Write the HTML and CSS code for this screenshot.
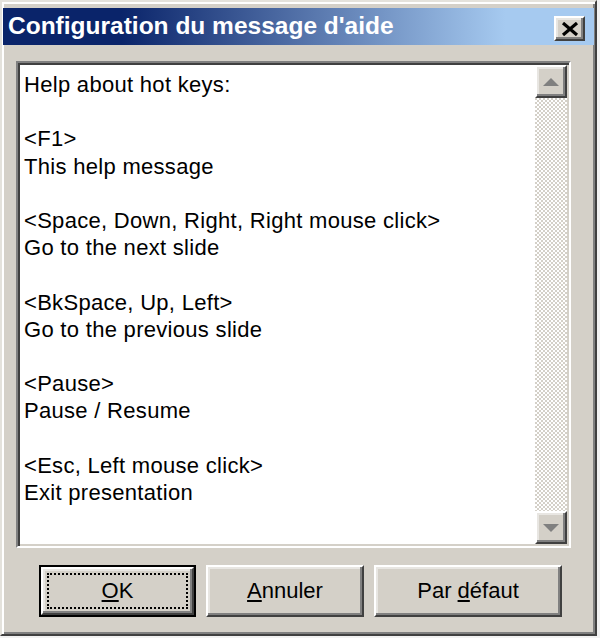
FILE: index.html
```html
<!DOCTYPE html>
<html lang="fr">

<head>
    <title>Configuration du message d'aide</title>
    <meta charset="utf-8">
    <link rel="stylesheet" href="styles.css">
</head>

<body>
    <div class="dlg_window">
        <div class="dlg_titlebar">
            <span class="dlg_title">Configuration du message d'aide</span>
            <div class="dlg_close raised">
                <svg width="18" height="14" viewBox="0 0 18 14">
                    <path d="M2 1 L16 13 M16 1 L2 13" stroke="#000" stroke-width="3.2" fill="none" />
                </svg>
            </div>
        </div>

        <div class="dlg_editbox">
            <div class="dlg_text">Help about hot keys:

&lt;F1&gt;
This help message

&lt;Space, Down, Right, Right mouse click&gt;
Go to the next slide

&lt;BkSpace, Up, Left&gt;
Go to the previous slide

&lt;Pause&gt;
Pause / Resume

&lt;Esc, Left mouse click&gt;
Exit presentation</div>
            <div class="dlg_scrollbar">
                <div class="dlg_scroll-btn raised">
                    <svg width="16" height="8" viewBox="0 0 16 8">
                        <polygon points="0,8 8,0 16,8" fill="#808080" />
                    </svg>
                </div>
                <div class="dlg_scroll-track"></div>
                <div class="dlg_scroll-btn raised">
                    <svg width="16" height="8" viewBox="0 0 16 8">
                        <polygon points="0,0 8,8 16,0" fill="#808080" />
                    </svg>
                </div>
            </div>
        </div>

        <div class="dlg_buttons">
            <div class="dlg_default">
                <button class="dlg_button raised dlg_ok"><span class="dlg_focus"><u>O</u>K</span></button>
            </div>
            <button class="dlg_button raised dlg_cancel"><u>A</u>nnuler</button>
            <button class="dlg_button raised dlg_reset">Par <u>d</u>éfaut</button>
        </div>
    </div>
</body>

</html>
```

FILE: styles.css
```css
html {
    background: #f2f2f2;
}

body {
    margin: 0;
    font-family: "Liberation Sans", Arial, sans-serif;
    font-size: 22px;
    color: #000;
}

.raised {
    box-sizing: border-box;
    background: #d4d0c8;
    border: 2px solid;
    border-color: #ffffff #404040 #404040 #ffffff;
    box-shadow: inset -2px -2px #808080, inset 2px 2px #e8e6e2;
}

.dlg_window {
    box-sizing: border-box;
    width: 597px;
    height: 636px;
    background: #d4d0c8;
    border: 2px solid;
    border-color: #e4e2dc #404040 #404040 #e4e2dc;
    box-shadow: inset 2px 2px #ffffff, inset -2px -2px #808080;
    padding: 6px 0 0 1px;
    display: flex;
    flex-direction: column;
}

.dlg_titlebar {
    height: 37px;
    margin-right: 1px;
    background: linear-gradient(to right, #0a246a 0%, #0a246a 20%, #a6caf0 85%, #a6caf0 100%);
    display: flex;
    align-items: center;
    justify-content: space-between;
}

.dlg_title {
    color: #fff;
    font-weight: bold;
    font-size: 24.5px;
    padding-left: 5px;
    margin-top: -1px;
    white-space: nowrap;
}

.dlg_close {
    width: 31px;
    height: 25px;
    margin: 4px 9px 0 0;
    display: flex;
    align-items: center;
    justify-content: center;
}

.dlg_editbox {
    box-sizing: border-box;
    width: 555px;
    height: 487px;
    margin: 16px 0 0 13px;
    background: #fff;
    border: 2px solid;
    border-color: #808080 #ffffff #ffffff #808080;
    box-shadow: inset 2px 2px #404040, inset -2px -2px #d4d0c8;
    padding: 2px;
    display: flex;
}

.dlg_text {
    flex: 1;
    white-space: pre;
    line-height: 27.2px;
    padding: 6px 0 0 4px;
    letter-spacing: 0.3px;
    overflow: hidden;
}

.dlg_scrollbar {
    width: 32px;
    display: flex;
    flex-direction: column;
}

.dlg_scroll-btn {
    height: 33px;
    display: flex;
    align-items: center;
    justify-content: center;
}

.dlg_scroll-track {
    flex: 1;
    background: repeating-conic-gradient(#ffffff 0 25%, #d4d0c8 0 50%) 0 0 / 4px 4px;
}

.dlg_buttons {
    display: flex;
    gap: 10px;
    margin: 17px 0 0 36px;
}

.dlg_button {
    height: 52px;
    font-family: inherit;
    font-size: 22px;
    color: #000;
    padding: 0;
    cursor: pointer;
}

.dlg_default {
    box-sizing: border-box;
    width: 157px;
    height: 52px;
    border: 2px solid #000;
}

.dlg_ok {
    width: 153px;
    height: 48px;
    padding: 4px;
}

.dlg_focus {
    display: flex;
    align-items: center;
    justify-content: center;
    height: 100%;
    border: 2px dotted #000;
    box-sizing: border-box;
}

.dlg_cancel {
    width: 158px;
}

.dlg_reset {
    width: 188px;
}
```
